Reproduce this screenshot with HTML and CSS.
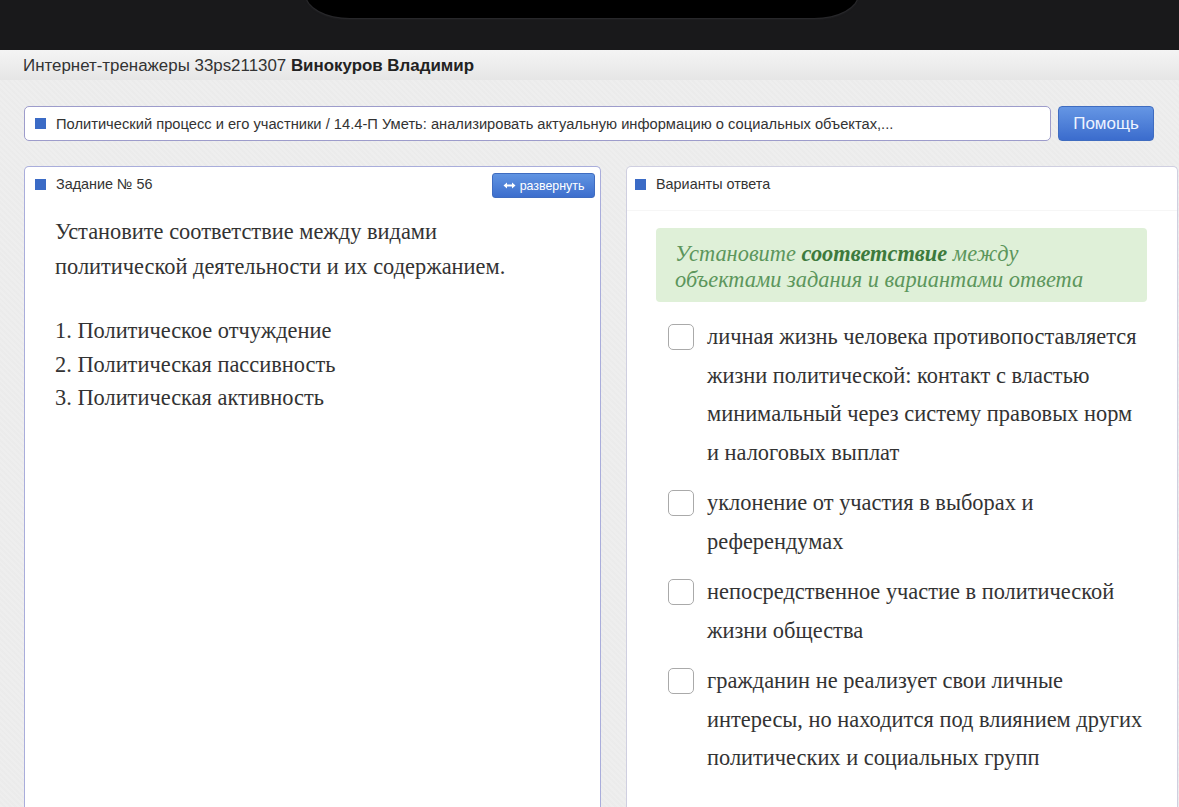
FILE: index.html
```html
<!DOCTYPE html>
<html lang="ru">
<head>
<meta charset="utf-8">
<title>Интернет-тренажеры</title>
<link rel="stylesheet" href="styles.css">
</head>
<body>
<div class="topframe"><div class="notch"></div></div>
<div class="userbar">Интернет-тренажеры 33ps211307 <b>Винокуров Владимир</b></div>
<main class="page">
  <div class="topicrow">
    <div class="topic"><span class="sq"></span><span class="topic-text">Политический процесс и его участники / 14.4-П Уметь: анализировать актуальную информацию о социальных объектах,...</span></div>
    <button class="help">Помощь</button>
  </div>
  <div class="cols">
    <section class="panel left">
      <div class="phead">
        <span class="sq"></span><span class="ptitle">Задание № 56</span>
        <button class="expand"><svg class="arr" width="13" height="7" viewBox="0 0 13 7"><path d="M0.5 3.5 L4 0.5 L4 2.6 L9 2.6 L9 0.5 L12.5 3.5 L9 6.5 L9 4.4 L4 4.4 L4 6.5 Z" fill="#fff"/></svg>развернуть</button>
      </div>
      <div class="lbody">
        <p class="question">Установите соответствие между видами политической деятельности и их содержанием.</p>
        <div class="items">
          <div>1. Политическое отчуждение</div>
          <div>2. Политическая пассивность</div>
          <div>3. Политическая активность</div>
        </div>
      </div>
    </section>
    <section class="panel right">
      <div class="phead rhead">
        <span class="sq"></span><span class="ptitle">Варианты ответа</span>
      </div>
      <div class="rbody">
        <div class="hint">Установите <b>соответствие</b> между объектами задания и вариантами ответа</div>
        <div class="opt"><span class="cb"></span><span class="otext">личная жизнь человека противопоставляется жизни политической: контакт с властью минимальный через систему правовых норм и налоговых выплат</span></div>
        <div class="opt"><span class="cb"></span><span class="otext">уклонение от участия в выборах и референдумах</span></div>
        <div class="opt"><span class="cb"></span><span class="otext">непосредственное участие в политической жизни общества</span></div>
        <div class="opt"><span class="cb"></span><span class="otext">гражданин не реализует свои личные интересы, но находится под влиянием других политических и социальных групп</span></div>
      </div>
    </section>
  </div>
</main>
</body>
</html>
```
FILE: styles.css
```css
html, body {
  margin: 0;
  padding: 0;
}
body {
  width: 1179px;
  height: 807px;
  overflow: hidden;
  background: #eeeeee;
  font-family: "Liberation Sans", Arial, sans-serif;
  color: #333;
}
.topframe {
  height: 50px;
  background: #19191b;
  display: flex;
  padding-left: 306px;
  overflow: hidden;
}
.notch {
  width: 552px;
  height: 24px;
  margin-top: -6px;
  background: #000;
  border-radius: 0 0 44px 44px / 0 0 24px 24px;
  box-shadow: 0 0 0 1px #28282b, 0 1px 2px #2e2e31;
}
.userbar {
  height: 30px;
  line-height: 31px;
  padding-left: 23px;
  font-size: 16.9px;
  color: #333;
  background: linear-gradient(#f4f4f4, #e6e6e6);
}
.userbar b { color: #222; }
.page {
  padding: 26px 25px 0 24px;
  background: #eeeeee;
  background-image: repeating-linear-gradient(45deg, rgba(0,0,0,0.012) 0 2px, transparent 2px 4px);
}
.topicrow {
  display: flex;
  gap: 7px;
  height: 35px;
  margin-bottom: 25px;
}
.topic {
  flex: 1;
  display: flex;
  align-items: center;
  background: #fff;
  border: 1px solid #9d9ccb;
  border-radius: 5px;
  padding-left: 10px;
  box-sizing: border-box;
}
.sq {
  width: 11px;
  height: 11px;
  background: #3b6bc6;
  flex: none;
}
.topic-text {
  margin-left: 10px;
  font-size: 14.7px;
  color: #333;
  white-space: nowrap;
}
.help {
  width: 96px;
  height: 35px;
  border: 1px solid #3f6cc0;
  border-radius: 4px;
  background: linear-gradient(#6596e4, #3b6ccd);
  color: #eef3ff;
  font-family: "Liberation Sans", Arial, sans-serif;
  font-size: 17px;
  padding: 0;
}
.cols {
  display: grid;
  grid-template-columns: 577px 552px;
  gap: 25px;
}
.panel {
  background: #fff;
  border: 1px solid #a9addb;
  border-bottom: none;
  border-radius: 5px 5px 0 0;
  height: 660px;
  box-sizing: border-box;
}
.panel.right {
  border-color: #cfcfe0;
}
.phead {
  height: 39px;
  display: flex;
  align-items: flex-start;
  padding: 6px 5px 0 10px;
  box-sizing: border-box;
}
.phead .sq { margin-top: 6px; }
.ptitle {
  margin-left: 10px;
  font-size: 14.4px;
  line-height: 23px;
  color: #333;
}
.rhead {
  padding-left: 8px;
  height: 44px;
  border-bottom: 1px solid #f6f6f6;
}
.expand {
  margin-left: auto;
  width: 103px;
  height: 25px;
  border: 1px solid #3f6cc0;
  border-radius: 3px;
  background: linear-gradient(#6094e2, #3d6ecd);
  color: #fff;
  font-family: "Liberation Sans", Arial, sans-serif;
  font-size: 12.4px;
  padding: 0;
  display: flex;
  align-items: center;
  justify-content: center;
  gap: 4px;
}
.lbody {
  padding: 8px 30px 0 30px;
  font-family: "Liberation Serif", "Times New Roman", serif;
  font-size: 22.4px;
  color: #333;
}
.question {
  margin: 0 0 30px;
  width: 490px;
  line-height: 35px;
}
.items div {
  line-height: 33.5px;
}
.rbody {
  padding: 17px 30px 0 29px;
  font-family: "Liberation Serif", "Times New Roman", serif;
  font-size: 22.4px;
  color: #333;
}
.hint {
  background: #dff0d8;
  border-radius: 4px;
  padding: 13px 60px 9px 19px;
  line-height: 26px;
  font-style: italic;
  color: #5c965c;
  margin-bottom: 16px;
}
.hint b { color: #3d7a3d; }
.opt {
  display: flex;
  margin-bottom: 12px;
}
.cb {
  flex: none;
  width: 24px;
  height: 24px;
  border: 1px solid #aaaaaa;
  border-radius: 5px;
  margin: 6px 13px 0 12px;
  background: #fff;
}
.otext {
  width: 440px;
  line-height: 38.5px;
}
```
